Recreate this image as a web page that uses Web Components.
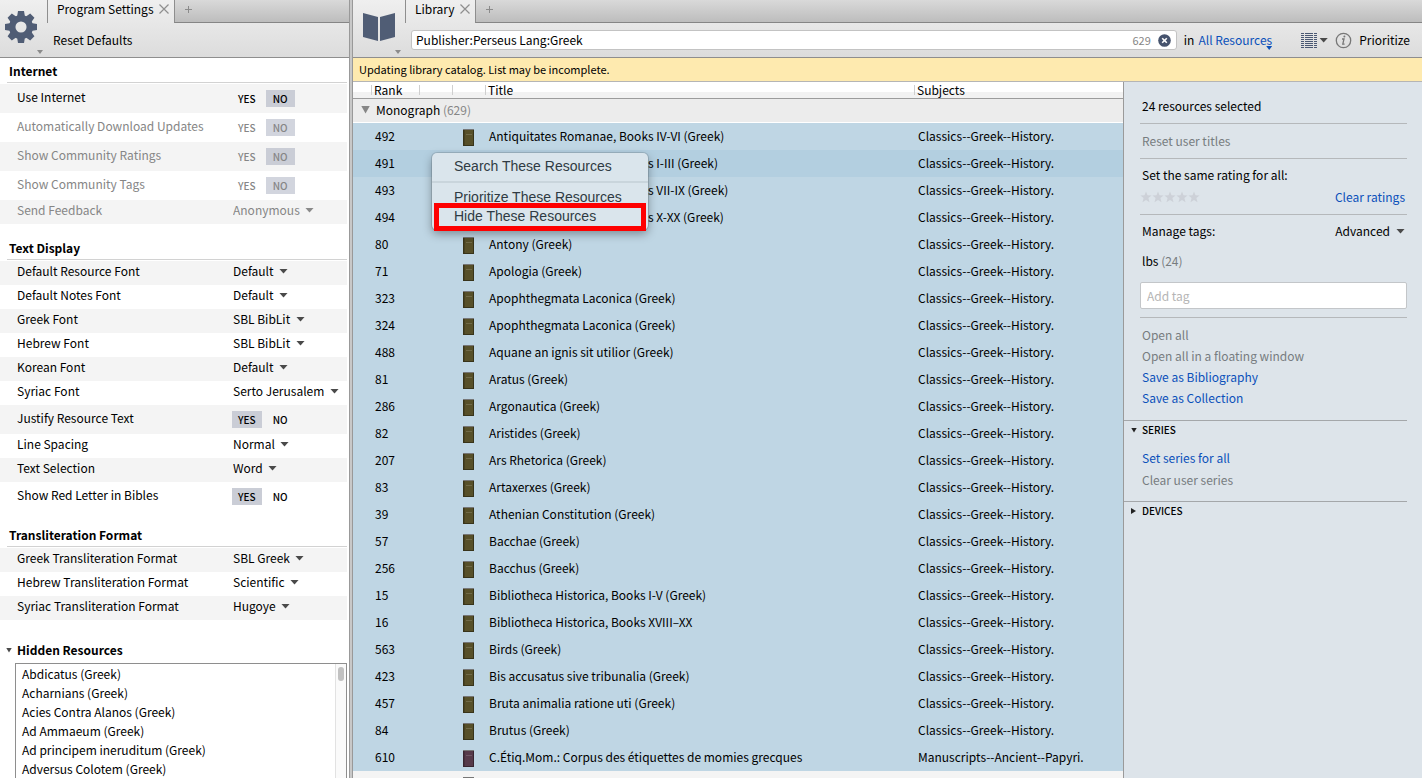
<!DOCTYPE html>
<html lang="en">
<head>
<meta charset="utf-8">
<meta name="viewport" content="width=device-width, initial-scale=1">
<title>Library</title>
<style>
    html, body {
        height: 100%;
        margin: 0;
    }
    body {
        overflow: hidden;
        background: #c8c8c8;
        color: #000;
        font: 12px/18px "Noto Sans CJK SC", "Noto Sans", sans-serif;
    }
</style>
</head>
<body>
<study-desk></study-desk>

<script>
/* reset shared by every shadow root */
const base = /*css*/`
    * { box-sizing: border-box; }
    button, input, select { font: inherit; color: inherit; margin: 0; padding: 0; border: 0; background: none; border-radius: 0; outline-offset: 1px; }
    button, select { cursor: pointer; text-align: left; }
    a { color: #0b50ba; text-decoration: none; }
    ul { list-style: none; margin: 0; padding: 0; }
    h2 { margin: 0; font-size: inherit; font-weight: bold; }
    .arrow { display: inline-block; width: 9px; height: 5px; background: #4a4a4a; clip-path: polygon(0 0, 100% 0, 50% 100%); }
    svg { display: block; }
`;

class TabPanel extends HTMLElement {
    constructor(){
        super()
        this.attachShadow({mode: 'open'})
    }

    connectedCallback(){
        this.render();
    }

    style(){
        return /*css*/`
        ${base}
        :host {
            display: flex;
            flex-direction: column;
            min-width: 0;
            min-height: 0;
            background: #fff;
        }
        header {
            display: grid;
            grid-template-columns: var(--icon-width, 47px) 1fr;
            height: 58px;
            flex: none;
            background: linear-gradient(#efefef, #dcdcdc);
            border-bottom: 1px solid #8e8e8e;
        }
        .app {
            position: relative;
            display: flex;
            padding: 11px 0 0 var(--icon-inset, 5px);
        }
        .app .arrow {
            position: absolute;
            right: 4px;
            bottom: 3px;
            width: 6px;
            height: 4px;
            background: #8b8b8b;
        }
        .right {
            display: flex;
            flex-direction: column;
            min-width: 0;
        }
        .strip {
            display: flex;
            height: 23px;
        }
        .tab {
            display: flex;
            align-items: center;
            gap: 5px;
            padding: 0 5px 5px 9px;
            border-left: 1px solid #8e8e8e;
        }
        .rest {
            flex: 1;
            display: flex;
            align-items: center;
            padding: 0 0 4px 9px;
            border-left: 1px solid #8e8e8e;
            border-bottom: 1px solid #858585;
            background: linear-gradient(#d9d9d9, #bdbdbd);
        }
        .tools {
            flex: 1;
            display: flex;
            align-items: center;
            padding: 0 12px 0 6px;
        }
        .content {
            flex: 1;
            min-height: 0;
            display: flex;
            flex-direction: column;
        }
        `
    }

    render(){
        this.shadowRoot.innerHTML = /*html*/`
        <style>${this.style()}</style>
        <header>
            <button class="app" aria-label="${this.getAttribute('label')} menu"><slot name="icon"></slot><i class="arrow"></i></button>
            <div class="right">
                <div class="strip">
                    <div class="tab">
                        <span>${this.getAttribute('label')}</span>
                        <button aria-label="Close tab">
                            <svg width="10" height="10" viewBox="0 0 10 10" stroke="#8f8f8f" stroke-width="1.2"><path d="M0.500 0.500L9.500 9.500M9.500 0.500L0.500 9.500"/></svg>
                        </button>
                    </div>
                    <div class="rest">
                        <button aria-label="New tab">
                            <svg width="9" height="9" viewBox="0 0 9 9" stroke="#8b8b8b"><path d="M4.500 1V8M1 4.500H8"/></svg>
                        </button>
                    </div>
                </div>
                <div class="tools"><slot name="tools"></slot></div>
            </div>
        </header>
        <div class="content"><slot></slot></div>
        `
    }
}

class SettingsGroup extends HTMLElement {
    constructor(){
        super()
        this.attachShadow({mode: 'open'})
    }

    connectedCallback(){
        this.shadowRoot.innerHTML = /*html*/`
        <style>
            ${base}
            :host { display: block; margin-bottom: 11px; }
            h2 { margin: 0 0 1px 7px; padding: 4px 0 2px 2px; border-bottom: 1px solid #d2d2d2; }
        </style>
        <h2>${this.getAttribute('heading')}</h2>
        <slot></slot>
        `
    }
}

/* one settings line: a yes/no pair or a drop-down */
class SettingRow extends HTMLElement {
    constructor(){
        super()
        this.attachShadow({mode: 'open'})
    }

    connectedCallback(){
        this.render();
    }

    style(){
        return /*css*/`
        ${base}
        :host { display: block; }
        :host([shaded]) { background: #f4f4f4; }
        :host([disabled]) { color: #868686; --arrow: #8a8a8a; }
        .row {
            display: grid;
            grid-template-columns: 215px 1fr;
            align-items: center;
            min-height: 24px;
            padding: 0 0 4px 17px;
        }
        .toggle { min-height: 29px; padding-bottom: 0; }
        .toggle .name { padding-bottom: 3px; }
        .pair { display: flex; gap: 4px; font-size: 10px; line-height: 17px; font-weight: 500; }
        .pair label { position: relative; }
        .pair span { display: block; padding: 0 6px; }
        .pair label + label span { padding: 0 7px; }
        .pair input { position: absolute; inset: 0; width: 100%; height: 100%; appearance: none; cursor: pointer; }
        .pair input:checked + span { background: #cacdd6; }
        :host([disabled]:not([shaded])) .pair input:checked + span { background: #d2d5de; }
        .pick { display: flex; align-items: center; gap: 5px; padding-left: 1px; }
        .pick select { appearance: none; color: inherit; opacity: 1; }
        .pick .arrow { background: var(--arrow, #4a4a4a); }
        `
    }

    render(){
        const name = this.getAttribute('name');
        const value = this.getAttribute('value');
        const off = this.hasAttribute('disabled') ? 'disabled' : '';
        const toggle = value === 'YES' || value === 'NO';
        const control = toggle
            ? `<div class="pair" role="radiogroup" aria-label="${name}">${['YES', 'NO'].map(v =>
                `<label><input type="radio" name="v" ${v === value ? 'checked' : ''} ${off}><span>${v}</span></label>`).join('')}</div>`
            : `<div class="pick"><select id="pick" ${off}><option>${value}</option></select><i class="arrow"></i></div>`;
        this.shadowRoot.innerHTML = /*html*/`
        <style>${this.style()}</style>
        <div class="row ${toggle ? 'toggle' : ''}">
            ${toggle ? `<span class="name">${name}</span>` : `<label class="name" for="pick">${name}</label>`}
            ${control}
        </div>
        `
    }
}

class HiddenResources extends HTMLElement {
    constructor(){
        super()
        this.attachShadow({mode: 'open'})
    }

    connectedCallback(){
        const names = ['Abdicatus', 'Acharnians', 'Acies Contra Alanos', 'Ad Ammaeum', 'Ad principem ineruditum', 'Adversus Colotem'];
        this.shadowRoot.innerHTML = /*html*/`
        <style>
            ${base}
            :host { display: flex; flex-direction: column; flex: 1; min-height: 0; padding-top: 10px; }
            h2 { display: flex; align-items: center; gap: 5px; padding: 0 0 4px 6px; }
            h2 .arrow { width: 6px; height: 5px; }
            .box { flex: 1; min-height: 0; display: flex; margin-left: 15px; border: 1px solid #8e8e8e; border-bottom: 0; overflow: hidden; }
            ul { flex: 1; padding-left: 6px; line-height: 19px; }
            .bar { width: 11px; padding: 3px 2px; border-left: 1px solid #e2e2e2; background: #fafafa; }
            .thumb { height: 14px; border-radius: 3px; background: #c1c1c1; }
        </style>
        <h2><i class="arrow"></i>Hidden Resources</h2>
        <div class="box">
            <ul>${names.map(n => `<li>${n} (Greek)</li>`).join('')}</ul>
            <div class="bar"><div class="thumb"></div></div>
        </div>
        `
    }
}

class LibrarySearch extends HTMLElement {
    constructor(){
        super()
        this.attachShadow({mode: 'open'})
    }

    connectedCallback(){
        this.render();
    }

    style(){
        return /*css*/`
        ${base}
        :host { display: flex; align-items: center; flex: 1; min-width: 0; }
        .field {
            flex: 1;
            display: flex;
            align-items: center;
            gap: 7px;
            height: 20px;
            padding: 0 5px 0 4px;
            border: 1px solid #c3c3c3;
            border-radius: 3px;
            background: #fff;
        }
        .field input { flex: 1; min-width: 0; outline: none; }
        .count { font-size: 11px; color: #858585; }
        .scope { display: flex; gap: 4px; margin: 0 29px 0 7px; }
        .scope a { position: relative; }
        .scope .arrow { position: absolute; right: 0; bottom: -1px; width: 6px; height: 4px; background: #0b50ba; }
        .view { display: flex; align-items: center; gap: 2px; margin-right: 7px; }
        .info { margin-right: 7px; }
        `
    }

    render(){
        this.shadowRoot.innerHTML = /*html*/`
        <style>${this.style()}</style>
        <div class="field">
            <input type="text" aria-label="Find resources" value="Publisher:Perseus Lang:Greek">
            <span class="count">629</span>
            <button aria-label="Clear search">
                <svg width="13" height="13" viewBox="0 0 13 13"><circle cx="6.500" cy="6.500" r="6.300" fill="#46536d"/><path d="M4.200 4.200L8.800 8.800M8.800 4.200L4.200 8.800" stroke="#fff" stroke-width="1.600"/></svg>
            </button>
        </div>
        <div class="scope"><span>in</span><a href="#">All Resources<i class="arrow"></i></a></div>
        <button class="view" aria-label="View">
            <svg width="16" height="15" viewBox="0 0 16 15" fill="none" stroke="#4a5873">
                <path d="M1.500 0V15" stroke-width="3" stroke-dasharray="1 1"/>
                <path d="M5 0V15M8.500 0V15" stroke-width="2" stroke-dasharray="1 1"/>
                <path d="M8.500 0V15" stroke-width="7" stroke-dasharray="1 1"/>
                <path d="M14.500 0V15" stroke-width="3" stroke-dasharray="1 1"/>
            </svg>
            <i class="arrow"></i>
        </button>
        <button class="info" aria-label="Information">
            <svg width="17" height="17" viewBox="0 0 17 17" fill="none" stroke="#777">
                <circle cx="8.500" cy="8.500" r="7.200" stroke-width="1.300"/>
                <path d="M7 7H9L7.800 12.200H9.600" stroke-width="1.300"/>
                <circle cx="9.400" cy="4.500" r="1" fill="#777" stroke="none"/>
            </svg>
        </button>
        <button>Prioritize</button>
        `
    }
}

class ResourceTable extends HTMLElement {
    constructor(){
        super()
        this.attachShadow({mode: 'open'})
    }

    connectedCallback(){
        this.render();
    }

    rows(){
        return [
            [492, 'Antiquitates Romanae, Books IV-VI (Greek)'],
            [491, 'Antiquitates Romanae, Books I-III (Greek)'],
            [493, 'Antiquitates Romanae, Books VII-IX (Greek)'],
            [494, 'Antiquitates Romanae, Books X-XX (Greek)'],
            [80, 'Antony (Greek)'],
            [71, 'Apologia (Greek)'],
            [323, 'Apophthegmata Laconica (Greek)'],
            [324, 'Apophthegmata Laconica (Greek)'],
            [488, 'Aquane an ignis sit utilior (Greek)'],
            [81, 'Aratus (Greek)'],
            [286, 'Argonautica (Greek)'],
            [82, 'Aristides (Greek)'],
            [207, 'Ars Rhetorica (Greek)'],
            [83, 'Artaxerxes (Greek)'],
            [39, 'Athenian Constitution (Greek)'],
            [57, 'Bacchae (Greek)'],
            [256, 'Bacchus (Greek)'],
            [15, 'Bibliotheca Historica, Books I-V (Greek)'],
            [16, 'Bibliotheca Historica, Books XVIII–XX'],
            [563, 'Birds (Greek)'],
            [423, 'Bis accusatus sive tribunalia (Greek)'],
            [457, 'Bruta animalia ratione uti (Greek)'],
            [84, 'Brutus (Greek)'],
            [610, 'C.Étiq.Mom.: Corpus des étiquettes de momies grecques', 'Manuscripts--Ancient--Papyri.', '#563a4a'],
        ];
    }

    book(color){
        return `<svg width="11" height="17" viewBox="0 0 11 17"><path fill="${color}" d="M0 0H11V17H0z"/><path fill="#000" opacity=".35" d="M0 0H1.500V17H0zM10 0H11V17H10zM0 16H11V17H0z"/><path fill="#777" d="M0 0H11V1H0z"/><path fill="#fff" opacity=".15" d="M3 5H9V6H3z"/></svg>`
    }

    style(){
        return /*css*/`
        ${base}
        :host { display: block; flex: 1; min-width: 0; overflow: hidden; background: #f4f4f4; }
        table { width: 100%; table-layout: fixed; border-collapse: separate; border-spacing: 0; }
        th, td { padding: 0; font-weight: normal; text-align: left; white-space: nowrap; overflow: hidden; }
        thead th {
            height: 17px;
            padding-left: 3px;
            line-height: 16px;
            border-bottom: 1px solid #9c9c9c;
            background: linear-gradient(90deg, #cfcfcf, #cfcfcf) 0 3px / 1px 10px no-repeat, linear-gradient(#fff 60%, #f2f2f2 60%);
        }
        thead th:first-child { background: linear-gradient(#fff 60%, #f2f2f2 60%); }
        .group th { height: 24px; padding: 0 0 2px 8px; background: #ececec; border-bottom: 1px solid #fff; }
        .group button { display: flex; align-items: center; gap: 6px; }
        .group .arrow { height: 8px; background: #868686; }
        .count { color: #868686; }
        .item td { height: 27px; padding: 0 0 2px 4px; background: #bfd6e4; }
        .item:hover td, .current td { background: #b3cfe0; }
        td.cover, .item td.cover { padding: 2px 0 0 11px; }
        .next td { height: 27px; }
        .next td.cover { vertical-align: top; padding-top: 6px; }
        `
    }

    render(){
        const items = this.rows().map(([rank, title, subject = 'Classics--Greek--History.', color = '#575029']) => /*html*/`
            <tr class="item ${rank === 491 ? 'current' : ''}"><td></td><td>${rank}</td><td></td><td class="cover">${this.book(color)}</td><td>${title}</td><td>${subject}</td></tr>`).join('');
        this.shadowRoot.innerHTML = /*html*/`
        <style>${this.style()}</style>
        <table>
            <colgroup><col style="width: 18px"><col style="width: 48px"><col style="width: 33px"><col style="width: 33px"><col><col style="width: 209px"></colgroup>
            <thead><tr><th></th><th>Rank</th><th></th><th></th><th>Title</th><th>Subjects</th></tr></thead>
            <tbody>
                <tr class="group"><th colspan="6"><button><i class="arrow"></i><span>Monograph <span class="count">(629)</span></span></button></th></tr>
                ${items}
                <tr class="next"><td></td><td></td><td></td><td class="cover">${this.book('#575029')}</td><td></td><td></td></tr>
            </tbody>
        </table>
        `
    }
}

class ContextMenu extends HTMLElement {
    constructor(){
        super()
        this.attachShadow({mode: 'open'})
    }

    connectedCallback(){
        this.shadowRoot.innerHTML = /*html*/`
        <style>
            ${base}
            :host {
                position: absolute;
                width: 216px;
                padding: 4px 0;
                border-radius: 5px;
                background: #dae5ec;
                box-shadow: 0 0 0 1px rgba(0, 0, 0, .12), 0 4px 10px rgba(0, 0, 0, .35);
                color: #2f3b43;
                font: 14px/19px "Liberation Sans", Arial, sans-serif;
            }
            button { display: block; width: 100%; padding: 0 22px; white-space: nowrap; }
            hr { height: 2px; margin: 5px 0; border: 0; background: #c9d5dc; }
            .marked { position: relative; }
            .marked::after { content: ""; position: absolute; inset: -4px 2px -5px; border: 5px solid #fe0000; }
        </style>
        <button>Search These Resources</button>
        <hr>
        <button>Prioritize These Resources</button>
        <button class="marked">Hide These Resources</button>
        `
    }
}

class ResourceDetails extends HTMLElement {
    constructor(){
        super()
        this.attachShadow({mode: 'open'})
    }

    connectedCallback(){
        this.render();
    }

    style(){
        return /*css*/`
        ${base}
        :host {
            display: block;
            flex: none;
            width: 299px;
            padding: 7px 15px 0 0;
            border-left: 1px solid #9a9a9a;
            background: #dde4ea;
        }
        section { margin-left: 16px; padding: 8px 2px; border-bottom: 1px solid #b5b8bb; }
        section:last-of-type { border: 0; }
        .line { display: flex; align-items: center; justify-content: space-between; min-height: 22px; }
        .muted { color: #777c80; }
        .tight { padding: 5px 2px 6px; }
        .stars { display: flex; margin-left: -2px; }
        .dropdown { display: flex; align-items: center; gap: 6px; }
        .tag { margin: 8px 0 10px; }
        input {
            display: block;
            width: calc(100% + 4px);
            height: 27px;
            margin: 0 0 2px -2px;
            padding: 0 6px;
            border: 1px solid #c3c6c9;
            border-radius: 2px;
            background: #fff;
        }
        input::placeholder { color: #b5b5b5; opacity: 1; }
        .links { padding-bottom: 2px; }
        .links li { height: 21px; }
        .fold { border-top: 1px solid #a4a7aa; padding-left: 7px; }
        .fold h2 button { display: flex; align-items: center; gap: 5px; font-size: 10px; font-weight: 500; }
        .fold ul { padding: 10px 0 8px 11px; }
        .fold li { height: 22px; }
        .fold .arrow { width: 6px; height: 5px; background: #222; }
        .fold .closed { height: 6px; width: 5px; margin-right: 1px; clip-path: polygon(0 0, 100% 50%, 0 100%); }
        `
    }

    render(){
        const star = '<svg width="12" height="12" viewBox="0 0 12 12" fill="#cdd1d8"><path d="M6 0.500L7.500 4.300L11.600 4.500L8.400 7.100L9.500 11.200L6 8.900L2.500 11.200L3.600 7.100L0.400 4.500L4.500 4.300z"/></svg>';
        this.shadowRoot.innerHTML = /*html*/`
        <style>${this.style()}</style>
        <section>24 resources selected</section>
        <section class="muted">Reset user titles</section>
        <section class="tight">
            <div class="line">Set the same rating for all:</div>
            <div class="line"><span class="stars">${star.repeat(5)}</span><a href="#">Clear ratings</a></div>
        </section>
        <section class="tight">
            <div class="line"><label for="tag">Manage tags:</label><button class="dropdown">Advanced<i class="arrow"></i></button></div>
            <div class="line tag"><span>lbs <span class="muted">(24)</span></span></div>
            <input id="tag" type="text" placeholder="Add tag">
        </section>
        <section>
            <ul class="links">
                <li class="muted">Open all</li>
                <li class="muted">Open all in a floating window</li>
                <li><a href="#">Save as Bibliography</a></li>
                <li><a href="#">Save as Collection</a></li>
            </ul>
        </section>
        <div class="fold">
            <h2><button><i class="arrow"></i>SERIES</button></h2>
            <ul><li><a href="#">Set series for all</a></li><li class="muted">Clear user series</li></ul>
        </div>
        <div class="fold"><h2><button><i class="arrow closed"></i>DEVICES</button></h2></div>
        `
    }
}

class StudyDesk extends HTMLElement {
    constructor(){
        super()
        this.attachShadow({mode: 'open'})
    }

    connectedCallback(){
        this.render();
    }

    style(){
        return /*css*/`
        ${base}
        :host { display: flex; gap: 3px; height: 100vh; }
        .settings { flex: 0 0 350px; border-right: 1px solid #999; }
        .groups { flex: 1; display: flex; flex-direction: column; min-height: 0; margin-right: 2px; }
        .library { --icon-width: 52px; --icon-inset: 10px; flex: 1; border-left: 1px solid #999; margin-left: -1px; }
        .notice { margin: 0; padding: 2px 6px 3px; background: #feeaaf; border-bottom: 1px solid #b5b5b5; font-size: 11px; }
        .main { position: relative; flex: 1; display: flex; min-height: 0; }
        context-menu { left: 79px; top: 71px; }
        `
    }

    render(){
        this.shadowRoot.innerHTML = /*html*/`
        <style>${this.style()}</style>
        <tab-panel class="settings" label="Program Settings">
            <svg slot="icon" width="32" height="32" viewBox="-16 -16 32 32" fill="#505d75">
                <circle r="8.800" fill="none" stroke="#505d75" stroke-width="6.500"/>
                <path d="M-3 -16H3L4 -10H-4zM-3 16H3L4 10H-4zM-16 -3V3L-10 4V-4zM16 -3V3L10 4V-4z"/>
                <path transform="rotate(45)" d="M-3 -16H3L4 -10H-4zM-3 16H3L4 10H-4zM-16 -3V3L-10 4V-4zM16 -3V3L10 4V-4z"/>
            </svg>
            <button slot="tools">Reset Defaults</button>
            <div class="groups">
                <settings-group heading="Internet">
                    <setting-row name="Use Internet" value="NO" shaded></setting-row>
                    <setting-row name="Automatically Download Updates" value="NO" disabled></setting-row>
                    <setting-row name="Show Community Ratings" value="NO" shaded disabled></setting-row>
                    <setting-row name="Show Community Tags" value="NO" disabled></setting-row>
                    <setting-row name="Send Feedback" value="Anonymous" shaded disabled></setting-row>
                </settings-group>
                <settings-group heading="Text Display">
                    <setting-row name="Default Resource Font" value="Default" shaded></setting-row>
                    <setting-row name="Default Notes Font" value="Default"></setting-row>
                    <setting-row name="Greek Font" value="SBL BibLit" shaded></setting-row>
                    <setting-row name="Hebrew Font" value="SBL BibLit"></setting-row>
                    <setting-row name="Korean Font" value="Default" shaded></setting-row>
                    <setting-row name="Syriac Font" value="Serto Jerusalem"></setting-row>
                    <setting-row name="Justify Resource Text" value="YES" shaded></setting-row>
                    <setting-row name="Line Spacing" value="Normal"></setting-row>
                    <setting-row name="Text Selection" value="Word" shaded></setting-row>
                    <setting-row name="Show Red Letter in Bibles" value="YES"></setting-row>
                </settings-group>
                <settings-group heading="Transliteration Format">
                    <setting-row name="Greek Transliteration Format" value="SBL Greek" shaded></setting-row>
                    <setting-row name="Hebrew Transliteration Format" value="Scientific"></setting-row>
                    <setting-row name="Syriac Transliteration Format" value="Hugoye" shaded></setting-row>
                </settings-group>
                <hidden-resources></hidden-resources>
            </div>
        </tab-panel>
        <tab-panel class="library" label="Library">
            <svg slot="icon" width="32" height="32" viewBox="0 0 32 32" fill="#505d75">
                <path d="M0 2L15 6V30L0 26zM32 2L17 6V30L32 26z"/>
            </svg>
            <library-search slot="tools"></library-search>
            <p class="notice">Updating library catalog. List may be incomplete.</p>
            <div class="main">
                <resource-table></resource-table>
                <resource-details></resource-details>
                <context-menu></context-menu>
            </div>
        </tab-panel>
        `
    }
}

customElements.define('tab-panel', TabPanel);
customElements.define('settings-group', SettingsGroup);
customElements.define('setting-row', SettingRow);
customElements.define('hidden-resources', HiddenResources);
customElements.define('library-search', LibrarySearch);
customElements.define('resource-table', ResourceTable);
customElements.define('context-menu', ContextMenu);
customElements.define('resource-details', ResourceDetails);
customElements.define('study-desk', StudyDesk);
</script>
</body>
</html>
